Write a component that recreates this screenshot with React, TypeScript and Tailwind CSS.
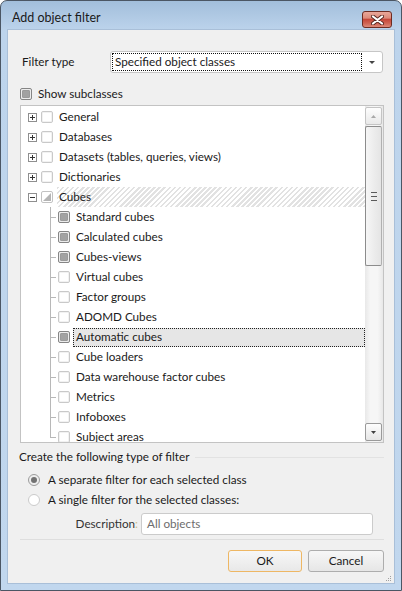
import React from 'react';

type Check = 'off' | 'on' | 'partial';

interface Node {
  label: string;
  check: Check;
  child?: boolean;
  expander?: '+' | '-';
  hatched?: boolean;
  selected?: boolean;
  last?: boolean;
}

const nodes: Node[] = [
  { label: 'General', check: 'off', expander: '+' },
  { label: 'Databases', check: 'off', expander: '+' },
  { label: 'Datasets (tables, queries, views)', check: 'off', expander: '+' },
  { label: 'Dictionaries', check: 'off', expander: '+' },
  { label: 'Cubes', check: 'partial', expander: '-', hatched: true },
  { label: 'Standard cubes', check: 'on', child: true },
  { label: 'Calculated cubes', check: 'on', child: true },
  { label: 'Cubes-views', check: 'on', child: true },
  { label: 'Virtual cubes', check: 'off', child: true },
  { label: 'Factor groups', check: 'off', child: true },
  { label: 'ADOMD Cubes', check: 'off', child: true },
  { label: 'Automatic cubes', check: 'on', child: true, selected: true },
  { label: 'Cube loaders', check: 'off', child: true },
  { label: 'Data warehouse factor cubes', check: 'off', child: true },
  { label: 'Metrics', check: 'off', child: true },
  { label: 'Infoboxes', check: 'off', child: true },
  { label: 'Subject areas', check: 'off', child: true, last: true },
];

function CheckBox({ state }: { state: Check }) {
  if (state === 'on') {
    return (
      <div className="w-[12px] h-[12px] shrink-0 rounded-[2px] border border-[#858585] bg-[#ececec] p-[1px]">
        <div className="w-full h-full rounded-[1px] bg-[#a2a2a2] border border-[#9a9a9a]" />
      </div>
    );
  }
  if (state === 'partial') {
    return (
      <div className="w-[12px] h-[12px] shrink-0 rounded-[2px] border border-[#c2c2c2] bg-white p-[1px]">
        <svg width="8" height="8" viewBox="0 0 8 8" className="block">
          <polygon points="8,0 8,8 0,8" fill="#b4b4b4" />
        </svg>
      </div>
    );
  }
  return (
    <div className="w-[12px] h-[12px] shrink-0 rounded-[2px] border border-[#c9c9c9] bg-white shadow-[inset_0_0_0_1px_#f2f2f2]" />
  );
}

function Expander({ sign }: { sign: '+' | '-' }) {
  return (
    <div className="w-[9px] h-[9px] shrink-0 border border-[#8f8f8f] bg-white relative">
      <div className="absolute left-[1px] right-[1px] top-[3px] h-[1px] bg-[#333]" />
      {sign === '+' && <div className="absolute top-[1px] bottom-[1px] left-[3px] w-[1px] bg-[#333]" />}
    </div>
  );
}

function TreeRow({ n }: { n: Node }) {
  if (!n.child) {
    return (
      <div className="h-[20px] flex items-center pl-[7px]">
        <Expander sign={n.expander ?? '+'} />
        <div className="ml-[4px]">
          <CheckBox state={n.check} />
        </div>
        <div
          className={`ml-[4px] h-[20px] flex-1 flex items-center pl-[2px] ${
            n.hatched
              ? 'bg-[repeating-linear-gradient(135deg,#e2e2e2_0px,#e2e2e2_1.8px,#ffffff_1.8px,#ffffff_3.6px)]'
              : ''
          }`}
        >
          <span className="text-[#1a1a1a]">{n.label}</span>
        </div>
      </div>
    );
  }
  return (
    <div className="h-[20px] flex items-center">
      {/* tree line */}
      <div className="w-[35px] h-[20px] shrink-0 relative">
        <div className={`absolute left-[29px] top-0 w-[1px] bg-[#b8b8b8] ${n.last ? 'h-[10px]' : 'h-[20px]'}`} />
        <div className="absolute left-[29px] top-[10px] w-[6px] h-[1px] bg-[#b8b8b8]" />
      </div>
      <div className="ml-[2px]">
        <CheckBox state={n.check} />
      </div>
      <div
        className={`ml-[3px] h-[19px] flex-1 flex items-center pl-[2px] ${
          n.selected ? 'bg-[#e6e6e6] border border-dotted border-[#222]' : 'border border-transparent'
        }`}
      >
        <span className="text-[#1a1a1a]">{n.label}</span>
      </div>
    </div>
  );
}

function ScrollBar() {
  return (
    <div className="w-[18px] shrink-0 pr-[1px] flex flex-col bg-[linear-gradient(90deg,#e8e8e8,#f6f6f6_30%,#f6f6f6_70%,#e8e8e8)]">
      <div className="mt-[1px] h-[18px] rounded-[2px] border border-[#c4c4c4] bg-[linear-gradient(#fdfdfd,#e9e9e9)] flex items-center justify-center">
        <svg width="5" height="3" viewBox="0 0 5 3">
          <polygon points="2.5,0 5,3 0,3" fill="#a8a8a8" />
        </svg>
      </div>
      <div className="mt-[1px] h-[140px] rounded-[2px] border border-[#8c8c8c] border-r-[#b0b0b0] bg-[linear-gradient(90deg,#f6f6f6,#e4e4e4)] flex flex-col items-center justify-center gap-[3px]">
        <div className="w-[6px] h-[1px] bg-[#5a5a5a]" />
        <div className="w-[6px] h-[1px] bg-[#5a5a5a]" />
        <div className="w-[6px] h-[1px] bg-[#5a5a5a]" />
      </div>
      <div className="flex-1" />
      <div className="mb-[1px] h-[18px] rounded-[2px] border border-[#9a9a9a] bg-[linear-gradient(#fdfdfd,#e6e6e6)] flex items-center justify-center">
        <svg width="5" height="3" viewBox="0 0 5 3">
          <polygon points="0,0 5,0 2.5,3" fill="#404040" />
        </svg>
      </div>
    </div>
  );
}

function Radio({ on }: { on: boolean }) {
  return on ? (
    <div className="w-[12px] h-[12px] shrink-0 rounded-full border border-[#9c9c9c] bg-[#eeeeee] flex items-center justify-center">
      <div className="w-[6px] h-[6px] rounded-full bg-[#727272]" />
    </div>
  ) : (
    <div className="w-[12px] h-[12px] shrink-0 rounded-full border border-[#cbcbcb] bg-white" />
  );
}

export default function App() {
  return (
    <div
      className="w-[402px] h-[591px] flex flex-col border border-[#4b5664] rounded-t-[7px] bg-[linear-gradient(#a2bedb,#bdd4ec_30px,#c1d7ee)] text-[11.7px] text-[#1a1a1a] overflow-hidden"
      style={{ fontFamily: 'Lato, "Noto Sans", sans-serif' }}
    >
      {/* Title bar */}
      <div className="h-[29px] shrink-0 flex items-start justify-between pl-[11px] pr-[9px]">
        <span className="pt-[9px] leading-[16px] text-[12.5px] text-[#1a1a1a]">Add object filter</span>
        <div className="mt-[10px] w-[30px] h-[17px] rounded-[3px] border border-[#6e2c22] bg-[linear-gradient(#e9a79a,#dd8b7b_40%,#c6483a_50%,#cf6352_75%,#dc8a7a)] flex items-center justify-center">
          <svg width="13" height="10" viewBox="0 0 13 10">
            <path d="M2 1.5 L11 8.5 M11 1.5 L2 8.5" stroke="#5a2a24" strokeWidth="4" strokeLinecap="round" />
            <path d="M2 1.5 L11 8.5 M11 1.5 L2 8.5" stroke="#ffffff" strokeWidth="2.2" strokeLinecap="round" />
          </svg>
        </div>
      </div>

      {/* Client area */}
      <div className="mx-[7px] mb-[7px] h-[553px] bg-[#f0f0f0] shadow-[0_0_0_1px_#a9bfd8] flex flex-col pl-[12px]">
        {/* Filter type */}
        <div className="mt-[21px] h-[22px] flex items-center">
          <span className="w-[90px] pl-[2px]">Filter type</span>
          <div className="w-[273px] h-[22px] rounded-[3px] border border-[#c6c6c6] bg-white flex items-center pl-[1px] pr-[1px]">
            <div className="w-[250px] h-[18px] border border-dotted border-[#111] flex items-center pl-[2px]">
              Specified object classes
            </div>
            <div className="flex-1 flex justify-center">
              <svg width="6" height="3" viewBox="0 0 6 3">
                <polygon points="0,0 6,0 3,3" fill="#444" />
              </svg>
            </div>
          </div>
        </div>

        {/* Show subclasses */}
        <div className="mt-[11px] h-[20px] flex items-center">
          <CheckBox state="on" />
          <span className="ml-[6px]">Show subclasses</span>
        </div>

        {/* Tree */}
        <div className="mt-[1px] w-[364px] h-[338px] border border-[#c3c3c3] bg-white flex">
          <div className="flex-1 overflow-hidden pt-[1px]">
            {nodes.map((n) => (
              <TreeRow key={n.label} n={n} />
            ))}
          </div>
          <ScrollBar />
        </div>

        {/* Filter kind */}
        <div className="mt-[5px] h-[18px] flex items-center ml-[-1px] pr-[10px]">
          <span>Create the following type of filter</span>
          <div className="flex-1 ml-[6px] h-[1px] bg-[#e2e2e2]" />
        </div>
        <div className="mt-[4px] h-[20px] flex items-center pl-[8px]">
          <Radio on />
          <span className="ml-[8px]">A separate filter for each selected class</span>
        </div>
        <div className="h-[20px] flex items-center pl-[8px]">
          <Radio on={false} />
          <span className="ml-[8px]">A single filter for the selected classes:</span>
        </div>
        <div className="mt-[3px] h-[22px] flex items-center">
          <span className="w-[118px] text-right text-[#333]">
            Description<span className="text-[#cbbd8a]">:</span>
          </span>
          <div className="ml-[3px] w-[232px] h-[22px] rounded-[3px] border border-[#cbcbcb] bg-white flex items-center pl-[5px] text-[#6d6d6d]">
            All objects
          </div>
        </div>
        <div className="mt-[4px] mr-[10px] h-[1px] bg-[#dedede]" />

        {/* Buttons */}
        <div className="mt-[10px] flex justify-end gap-[6px] pr-[10px]">
          <button className="w-[74px] h-[22px] rounded-[3px] border border-[#eeb764] bg-[linear-gradient(#f7f7f7,#e8e8e8)] text-[#1a1a1a]">
            OK
          </button>
          <button className="w-[76px] h-[22px] rounded-[3px] border border-[#adadad] bg-[linear-gradient(#f7f7f7,#e6e6e6)] text-[#1a1a1a]">
            Cancel
          </button>
        </div>
        <div className="mt-[3px] flex justify-end pr-[2px]">
          <svg width="7" height="7" viewBox="0 0 7 7">
            <rect x="5" y="1" width="1" height="1" fill="#a0a0a0" />
            <rect x="3" y="3" width="1" height="1" fill="#a0a0a0" />
            <rect x="5" y="3" width="1" height="1" fill="#a0a0a0" />
            <rect x="1" y="5" width="1" height="1" fill="#a0a0a0" />
            <rect x="3" y="5" width="1" height="1" fill="#a0a0a0" />
            <rect x="5" y="5" width="1" height="1" fill="#a0a0a0" />
          </svg>
        </div>
      </div>
    </div>
  );
}
